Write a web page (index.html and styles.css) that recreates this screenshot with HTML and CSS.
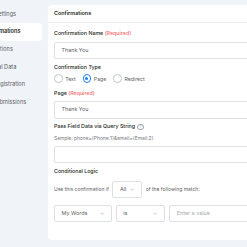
FILE: index.html
```html
<!DOCTYPE html>
<html lang="en">
<head>
    <meta charset="UTF-8">
    <meta name="viewport" content="width=device-width, initial-scale=1.0">
    <title>Confirmations</title>
    <link rel="stylesheet" href="styles.css">
</head>
<body>
    <div class="app">
        <ul class="side-menu">
            <li><span>Form Settings</span></li>
            <li class="active"><span>Confirmations</span></li>
            <li><span>Notifications</span></li>
            <li><span>Personal Data</span></li>
            <li><span>User Registration</span></li>
            <li><span>Post Submissions</span></li>
        </ul>

        <div class="card">
            <div class="card-header">Confirmations</div>
            <div class="card-body">
                <label class="label">Confirmation Name <span class="req">(Required)</span></label>
                <div class="input">Thank You</div>

                <label class="label">Confirmation Type</label>
                <div class="radios">
                    <span class="radio"><i class="dot"></i>Text</span>
                    <span class="radio checked"><i class="dot"></i>Page</span>
                    <span class="radio"><i class="dot"></i>Redirect</span>
                </div>

                <label class="label">Page <span class="req">(Required)</span></label>
                <div class="input">Thank You</div>

                <label class="label">Pass Field Data via Query String <span class="help">?</span></label>
                <p class="hint">Sample: phone={Phone:1}&amp;email={Email:2}</p>
                <div class="input"></div>

                <label class="label">Conditional Logic</label>
                <div class="cond-row">
                    <span class="muted">Use this confirmation if</span>
                    <div class="input select select-all">All <svg class="chev" viewBox="0 0 8 5"><path d="M1 1l3 3 3-3" /></svg></div>
                    <span class="muted">of the following match:</span>
                </div>
                <div class="rule-row">
                    <div class="input select select-field">My Words <svg class="chev" viewBox="0 0 8 5"><path d="M1 1l3 3 3-3" /></svg></div>
                    <div class="input select select-op">is <svg class="chev" viewBox="0 0 8 5"><path d="M1 1l3 3 3-3" /></svg></div>
                    <div class="input placeholder">Enter a value</div>
                </div>
            </div>
        </div>
    </div>
</body>
</html>
```

FILE: styles.css
```css
body {
    margin: 0;
    font-family: Inter, "Noto Sans", sans-serif;
    background-color: #f0f3f7;
    color: #1e1f21;
    overflow: hidden;
    width: 247px;
    height: 247px;
}
.app {
    display: flex;
    gap: 6px;
}

/* left settings menu, cut off by the window */
.side-menu {
    list-style: none;
    margin: 0;
    padding: 5.5px 0 0;
    width: 42px;
    flex: none;
}
.side-menu li {
    height: 17.7px;
    line-height: 17.7px;
    font-size: 5.6px;
    color: #606266;
    white-space: nowrap;
    border-radius: 0 3px 3px 0;
}
.side-menu li span {
    margin-left: -20.5px;
}
.side-menu li.active {
    background-color: #fff;
    color: #1e1f21;
    font-weight: 600;
}
.side-menu li.active span {
    margin-left: -18px;
}

.card {
    flex: none;
    width: 230px;
    height: 235px;
    margin-top: 5px;
    background-color: #fff;
    border-radius: 4px;
}
.card-header {
    height: 17px;
    line-height: 17px;
    padding-left: 6px;
    font-size: 5.4px;
    font-weight: 600;
    border-bottom: 1px solid #ececec;
}
.card-body {
    padding: 7.2px 6px 0;
}
.label {
    display: block;
    font-size: 5.3px;
    font-weight: 500;
    line-height: 7px;
    margin-bottom: 4.4px;
}
.req {
    color: #f56c6c;
}
.help {
    display: inline-block;
    width: 4.5px;
    height: 4.5px;
    line-height: 4.5px;
    margin-left: 1px;
    border: 0.6px solid #9ca3af;
    border-radius: 50%;
    color: #9ca3af;
    font-size: 3.6px;
    text-align: center;
    vertical-align: 0.5px;
}
.input {
    box-sizing: border-box;
    height: 17.4px;
    line-height: 15.4px;
    padding: 0 6.5px;
    border: 1px solid #dcdfe6;
    border-radius: 2px;
    font-size: 5.4px;
    color: #606266;
    margin-bottom: 4.6px;
}
.radios {
    display: flex;
    align-items: center;
    height: 9px;
    margin: -0.8px 0 6.6px;
    font-size: 5.2px;
    color: #606266;
}
.radio {
    display: flex;
    align-items: center;
    margin-right: 7px;
}
.dot {
    box-sizing: border-box;
    width: 8.6px;
    height: 8.6px;
    margin-right: 2.6px;
    border: 0.8px solid #c0c4cc;
    border-radius: 50%;
    display: flex;
    align-items: center;
    justify-content: center;
}
.radio.checked .dot {
    border-color: #1a7efb;
}
.radio.checked .dot::after {
    content: "";
    width: 3px;
    height: 3px;
    border-radius: 50%;
    background-color: #1a7efb;
}
.hint {
    margin: 0 0 4.2px;
    font-size: 4.9px;
    line-height: 7px;
    color: #787c82;
}
.cond-row {
    display: flex;
    align-items: center;
    gap: 3.6px;
    margin-top: 6px;
}
.cond-row .input {
    margin-bottom: 0;
}
.muted {
    font-size: 5px;
    color: #606266;
}
.select {
    display: flex;
    align-items: center;
    justify-content: space-between;
    flex: none;
}
.chev {
    width: 4.5px;
    height: 3px;
    fill: none;
    stroke: #909399;
    stroke-width: 0.9;
}
.select-all {
    width: 29.7px;
}
.rule-row {
    display: flex;
    gap: 4px;
    margin-top: 6.7px;
}
.rule-row .input {
    margin-bottom: 0;
}
.select-field {
    width: 57.7px;
}
.select-op {
    width: 49.6px;
}
.placeholder {
    flex: 1;
    color: #a8abb2;
}
```
